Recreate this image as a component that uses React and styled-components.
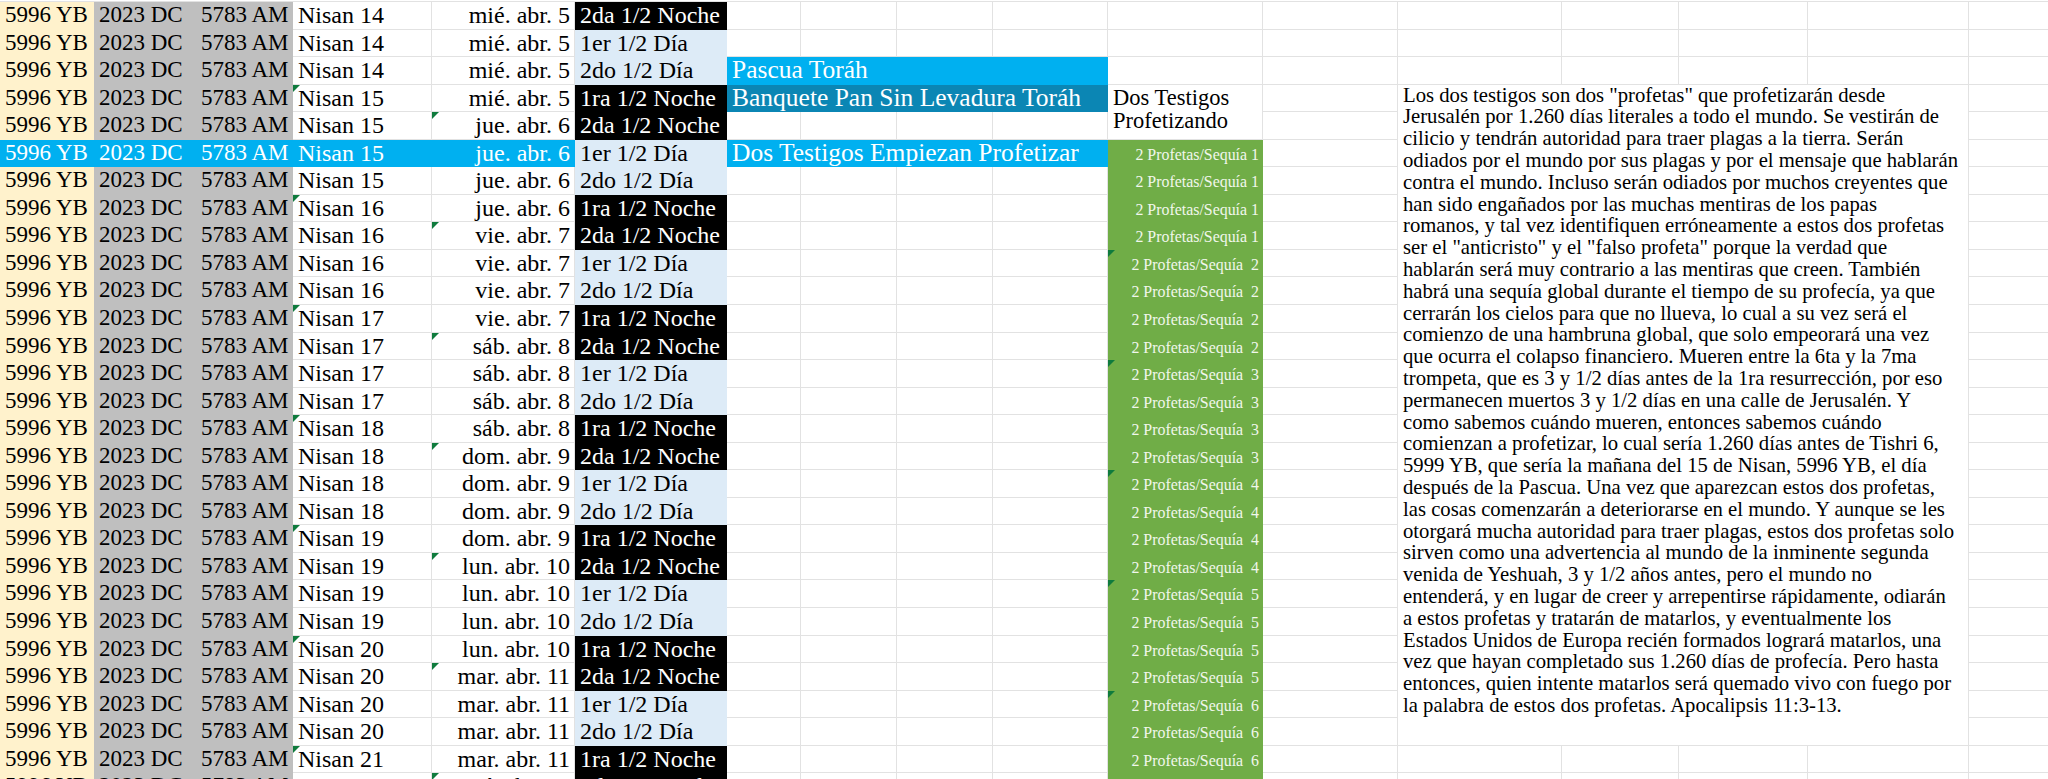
import React from "react";
import styled, { createGlobalStyle } from "styled-components";

const COLS = [94, 102, 97, 139, 143, 152, 74, 96, 96, 115, 155, 135, 164, 117, 129, 161, 130];
const ROWS = 29;
const GRID = "#e2e2e2";
const CYAN = "#00b0f0";

const GlobalStyle = createGlobalStyle`
  html, body {
    margin: 0;
    padding: 0;
    background: #fff;
    overflow: hidden;
  }
  body {
    font-family: "Liberation Serif", "Times New Roman", serif;
  }
`;

const Sheet = styled.div`
  display: grid;
  grid-template-columns: ${COLS.map((w) => w + "px").join(" ")};
  grid-template-rows: repeat(${ROWS}, 27.55px);
  width: 2048px;
  height: 778px;
  margin-top: 1px;
  border-top: 1px solid ${GRID};
  box-sizing: border-box;
  overflow: hidden;
`;

const Cell = styled.div`
  grid-row: ${(p) => p.$r} / span ${(p) => p.$rs || 1};
  grid-column: ${(p) => p.$c} / span ${(p) => p.$cs || 1};
  position: relative;
  box-sizing: border-box;
  border-right: 1px solid ${(p) => p.$bg || GRID};
  border-bottom: 1px solid ${(p) => p.$bg || GRID};
  background: ${(p) => p.$bg || "#fff"};
  color: ${(p) => p.$fg || "#000"};
  font-size: ${(p) => p.$size || 24}px;
  line-height: 26.5px;
  padding: 0 ${(p) => (p.$right ? "4px" : "5px")} 0 5px;
  text-align: ${(p) => (p.$right ? "right" : "left")};
  white-space: nowrap;
`;

const GreenCell = styled(Cell)`
  font-size: 15.9px;
  padding: 3px 3px 0 0;
  line-height: 23px;
  white-space: pre;
`;

const HeaderCell = styled(Cell)`
  font-size: 22.5px;
  line-height: 23px;
  white-space: normal;
  padding: 1px 5px 0 5px;
`;

const NoteCell = styled(Cell)`
  font-size: 20.7px;
  line-height: 21.8px;
  padding: 0 5px;
`;

const NoteLine = styled.div`
  white-space: nowrap;
`;

const Flag = styled.span`
  position: absolute;
  top: 0;
  left: 0;
  width: 0;
  height: 0;
  border-top: 7px solid #0f7b3d;
  border-right: 7px solid transparent;
`;

const NOTE = [
  'Los dos testigos son dos "profetas" que profetizarán desde',
  "Jerusalén por 1.260 días literales a todo el mundo. Se vestirán de",
  "cilicio y tendrán autoridad para traer plagas a la tierra. Serán",
  "odiados por el mundo por sus plagas y por el mensaje que hablarán",
  "contra el mundo. Incluso serán odiados por muchos creyentes que",
  "han sido engañados por las muchas mentiras de los papas",
  "romanos, y tal vez identifiquen erróneamente a estos dos profetas",
  'ser el "anticristo" y el "falso profeta" porque la verdad que',
  "hablarán será muy contrario a las mentiras que creen. También",
  "habrá una sequía global durante el tiempo de su profecía, ya que",
  "cerrarán los cielos para que no llueva, lo cual a su vez será el",
  "comienzo de una hambruna global, que solo empeorará una vez",
  "que ocurra el colapso financiero. Mueren entre la 6ta y la 7ma",
  "trompeta, que es 3 y 1/2 días antes de la 1ra resurrección, por eso",
  "permanecen muertos 3 y 1/2 días en una calle de Jerusalén. Y",
  "como sabemos cuándo mueren, entonces sabemos cuándo",
  "comienzan a profetizar, lo cual sería 1.260 días antes de Tishri 6,",
  "5999 YB, que sería la mañana del 15 de Nisan, 5996 YB, el día",
  "después de la Pascua. Una vez que aparezcan estos dos profetas,",
  "las cosas comenzarán a deteriorarse en el mundo. Y aunque se les",
  "otorgará mucha autoridad para traer plagas, estos dos profetas solo",
  "sirven como una advertencia al mundo de la inminente segunda",
  "venida de Yeshuah, 3 y 1/2 años antes, pero el mundo no",
  "entenderá, y en lugar de creer y arrepentirse rápidamente, odiarán",
  "a estos profetas y tratarán de matarlos, y eventualmente los",
  "Estados Unidos de Europa recién formados logrará matarlos, una",
  "vez que hayan completado sus 1.260 días de profecía. Pero hasta",
  "entonces, quien intente matarlos será quemado vivo con fuego por",
  "la palabra de estos dos profetas. Apocalipsis 11:3-13.",
];

const DATES = ["jue. abr. 6", "vie. abr. 7", "sáb. abr. 8", "dom. abr. 9", "lun. abr. 10", "mar. abr. 11", "mié. abr. 12"];
const HALVES = [
  { text: "2da 1/2 Noche", night: true },
  { text: "1er 1/2 Día" },
  { text: "2do 1/2 Día" },
  { text: "1ra 1/2 Noche", night: true },
];

const EVENTS = {
  3: { text: "Pascua Toráh", bg: CYAN },
  4: { text: "Banquete Pan Sin Levadura Toráh", bg: "#0b86b4" },
  6: { text: "Dos Testigos Empiezan Profetizar", bg: CYAN },
};

const rows = Array.from({ length: ROWS }, (_, i) => {
  const r = i + 1;
  const nisan = r <= 3 ? 14 : 15 + Math.floor((r - 4) / 4);
  const date = r <= 4 ? "mié. abr. 5" : DATES[Math.floor((r - 5) / 4)];
  const seq = r < 6 ? null : r <= 9 ? 1 : 2 + Math.floor((r - 10) / 4);
  return {
    r,
    nisan,
    date,
    half: HALVES[(r - 1) % 4],
    seq,
    hl: r === 6,
    flagD: r >= 4 && (r - 4) % 4 === 0,
    flagE: r >= 5 && (r - 5) % 4 === 0,
    flagK: r >= 10 && (r - 10) % 4 === 0,
  };
});

const taken = new Set();
const take = (r, c, rs = 1, cs = 1) => {
  for (let y = r; y < r + rs; y++) for (let x = c; x < c + cs; x++) taken.add(`${y}-${x}`);
};
rows.forEach(({ r, seq }) => {
  for (let c = 1; c <= 6; c++) take(r, c);
  if (EVENTS[r]) take(r, 7, 1, 4);
  if (seq) take(r, 11);
});
take(4, 11, 2, 1);
take(4, 13, 24, 4);

export default function App() {
  const empties = [];
  for (let r = 1; r <= ROWS; r++)
    for (let c = 1; c <= COLS.length; c++)
      if (!taken.has(`${r}-${c}`)) empties.push(<Cell key={`e${r}-${c}`} $r={r} $c={c} />);

  return (
    <>
      <GlobalStyle />
      <Sheet>
        {rows.map(({ r, nisan, date, half, seq, hl, flagD, flagE, flagK }) => (
          <React.Fragment key={r}>
            <Cell $r={r} $c={1} $size={23} $bg={hl ? CYAN : "#fff2cc"} $fg={hl ? "#fff" : "#000"}>
              5996 YB
            </Cell>
            <Cell $r={r} $c={2} $size={23} $bg={hl ? CYAN : "#bfbfbf"} $fg={hl ? "#fff" : "#000"}>
              2023 DC
            </Cell>
            <Cell $r={r} $c={3} $size={23} $bg={hl ? CYAN : "#bfbfbf"} $fg={hl ? "#fff" : "#000"}>
              5783 AM
            </Cell>
            <Cell $r={r} $c={4} $bg={hl ? CYAN : undefined} $fg={hl ? "#fff" : "#000"}>
              {flagD && <Flag />}
              Nisan {nisan}
            </Cell>
            <Cell $r={r} $c={5} $right $bg={hl ? CYAN : undefined} $fg={hl ? "#fff" : "#000"}>
              {flagE && <Flag />}
              {date}
            </Cell>
            <Cell $r={r} $c={6} $bg={half.night ? "#000" : "#ddebf7"} $fg={half.night ? "#fff" : "#000"}>
              {half.text}
            </Cell>
            {EVENTS[r] && (
              <Cell $r={r} $c={7} $cs={4} $size={25.5} $bg={EVENTS[r].bg} $fg="#fff">
                {EVENTS[r].text}
              </Cell>
            )}
            {seq && (
              <GreenCell $r={r} $c={11} $right $bg="#70ad47" $fg="#f1f7ec">
                {flagK && <Flag />}
                {seq === 1 ? "2 Profetas/Sequía 1" : `2 Profetas/Sequía  ${seq}`}
              </GreenCell>
            )}
          </React.Fragment>
        ))}
        <HeaderCell $r={4} $c={11} $rs={2}>
          Dos Testigos Profetizando
        </HeaderCell>
        <NoteCell $r={4} $c={13} $rs={24} $cs={4}>
          {NOTE.map((line, i) => (
            <NoteLine key={i}>{line}</NoteLine>
          ))}
        </NoteCell>
        {empties}
      </Sheet>
    </>
  );
}
